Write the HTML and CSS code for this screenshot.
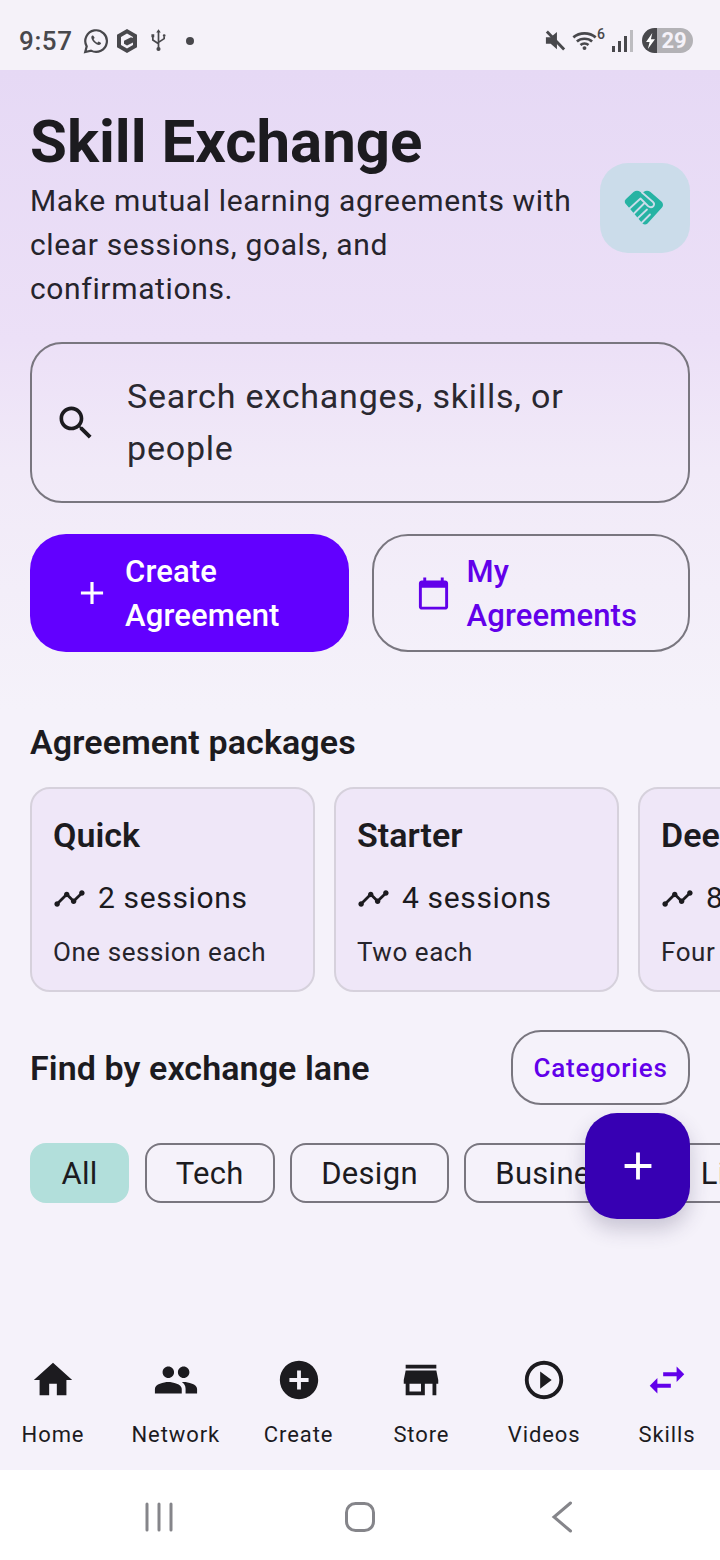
FILE: index.html
```html
<!DOCTYPE html>
<html lang="en">
<head>
<meta charset="utf-8">
<title>Skill Exchange</title>
<link rel="stylesheet" href="styles.css">
</head>
<body>
<div class="app">
  <header class="status">
    <span class="time">9:57</span>
    <svg class="st-wa" viewBox="0 0 26 26"><path class="line" d="M2.2 24l1.5-5.6A10.8 10.8 0 1 1 8 22.6z"/><path class="solid" d="M9.6 7.4c-.5 0-1.2.5-1.3 1.7-.1 1.6 1 3.6 2.6 5.2 1.7 1.7 3.9 2.8 5.3 2.6 1.2-.2 1.9-1 1.9-1.8 0-.3-2.3-1.6-2.6-1.5l-1.1 1.2c-1.4-.5-3.2-2.3-3.8-3.8l1-1.1c.2-.3-1.1-2.5-2-2.5z"/></svg>
    <svg class="st-hex" viewBox="0 0 20 24"><path class="solid" fill-rule="evenodd" d="M10 0l10 5.8v12.4L10 24 0 18.2V5.8zM10 4.5L4 8v8l6 3.5 6-3.5v-2.5l-6 3-3-1.7v-3l7-3.6 1.6.9L16 8z"/></svg>
    <svg class="st-usb" viewBox="0 0 18 24"><path class="line thin" d="M9 3v18M3 8v3.5l6 4M15 8v2l-6 4"/><path class="solid" d="M9 0l2.4 3.6H6.600zM1.500 5.500h3v3h-3zM15 5.300a1.500 1.500 0 1 1 0 3 1.500 1.500 0 0 1 0-3zM9 18.800a2.200 2.200 0 1 1 0 4.400 2.200 2.200 0 0 1 0-4.400z"/></svg>
    <span class="st-dot"></span>
    <span class="st-fill"></span>
    <svg class="st-mute" viewBox="0 0 24 24"><path class="solid" d="M2 8.500h5L13.500 3v18L7 15.500H2z"/><path class="mute-a" d="M3 2.500l18 19"/></svg>
    <svg class="st-wifi" viewBox="0 0 28 22"><path class="line wifi" d="M1.500 7.500c7-6 18-6 25 0M5.500 12c4.500-4 12.500-4 17 0M9.500 16c2.500-2 6.500-2 9 0"/><circle class="solid" cx="14" cy="19.500" r="2.200"/></svg>
    <span class="st-six">6</span>
    <svg class="st-signal" viewBox="0 0 22 24"><rect class="solid" x="0" y="17" width="3" height="6"/><rect class="solid" x="6" y="12" width="3" height="11"/><rect class="solid" x="12" y="7" width="3" height="16"/><rect class="dim" x="18" y="1" width="3" height="22"/></svg>
    <span class="st-batt"><span class="st-batt-l"><svg viewBox="0 0 12 18"><path class="white" d="M8 0L1 10h4l-2 8 8-11H6.500z"/></svg></span><span class="st-batt-r">29</span></span>
  </header>

  <main class="main">
    <section class="hero">
      <div class="hero-text">
        <h1>Skill Exchange</h1>
        <p>Make mutual learning agreements with clear sessions, goals, and confirmations.</p>
      </div>
      <div class="hero-badge">
        <svg viewBox="0 0 50 46"><path class="teal" d="M5 18Q4 15.500 6 14L13.500 7Q17 4.500 20.500 7L22 8.300 23.500 7Q27 4.500 30.500 7L42 17Q44 20 42 22.500L27.500 38.500Q25 40.500 22.500 38.500Z"/><path class="slit" d="M9 24L20.500 13.500 28 21Q31 23.500 33.500 21 35 19 33 17L22 7.500M14 28.500L24 18.500M18 33L27 24.500M22 37.500L30 29.500"/></svg>
      </div>
    </section>

    <div class="search">
      <svg viewBox="0 0 24 24"><path class="ink" d="M15.500 14h-.79l-.28-.27C15.410 12.590 16 11.110 16 9.500 16 5.910 13.090 3 9.500 3S3 5.910 3 9.500 5.910 16 9.500 16c1.610 0 3.090-.59 4.230-1.570l.27.28v.79l5 4.990L20.490 19l-4.990-5zm-6 0C7.010 14 5 11.990 5 9.500S7.010 5 9.500 5 14 7.010 14 9.500 11.990 14 9.500 14z"/></svg>
      <span>Search exchanges, skills, or people</span>
    </div>

    <div class="actions">
      <button class="btn btn-primary">
        <svg viewBox="0 0 24 24"><path class="white" d="M19 13h-6v6h-2v-6H5v-2h6V5h2v6h6z"/></svg>
        <span>Create Agreement</span>
      </button>
      <button class="btn btn-outline">
        <svg viewBox="0 0 24 24"><path class="purple" d="M20 3h-1V1h-2v2H7V1H5v2H4c-1.100 0-2 .9-2 2v16c0 1.100.9 2 2 2h16c1.100 0 2-.9 2-2V5c0-1.100-.9-2-2-2zm0 18H4V8h16v13z"/></svg>
        <span>My Agreements</span>
      </button>
    </div>

    <h2 class="sec-title packages-title">Agreement packages</h2>

    <div class="cards">
      <article class="card">
        <h3>Quick</h3>
        <div class="card-row"><svg viewBox="0 0 24 24"><use href="#timeline"/></svg><span>2 sessions</span></div>
        <div class="card-note">One session each</div>
      </article>
      <article class="card">
        <h3>Starter</h3>
        <div class="card-row"><svg viewBox="0 0 24 24"><use href="#timeline"/></svg><span>4 sessions</span></div>
        <div class="card-note">Two each</div>
      </article>
      <article class="card">
        <h3>Deep</h3>
        <div class="card-row"><svg viewBox="0 0 24 24"><use href="#timeline"/></svg><span>8 sessions</span></div>
        <div class="card-note">Four each</div>
      </article>
    </div>

    <div class="lane-head">
      <h2 class="sec-title">Find by exchange lane</h2>
      <button class="cat-btn">Categories</button>
    </div>

    <div class="chips">
      <span class="chip chip-on">All</span>
      <span class="chip">Tech</span>
      <span class="chip">Design</span>
      <span class="chip">Business</span>
      <span class="chip">Life</span>
    </div>
  </main>

  <button class="fab" aria-label="Add"><svg viewBox="0 0 24 24"><path class="white" d="M19 13h-6v6h-2v-6H5v-2h6V5h2v6h6z"/></svg></button>

  <nav class="tabs">
    <div class="tab"><svg viewBox="0 0 24 24"><path class="ink" d="M10 20v-6h4v6h5v-8h3L12 3 2 12h3v8z"/></svg><span>Home</span></div>
    <div class="tab"><svg viewBox="0 0 24 24"><path class="ink" d="M16 11c1.660 0 2.990-1.340 2.990-3S17.660 5 16 5c-1.660 0-3 1.340-3 3s1.340 3 3 3zm-8 0c1.660 0 2.990-1.340 2.990-3S9.660 5 8 5C6.340 5 5 6.340 5 8s1.340 3 3 3zm0 2c-2.330 0-7 1.170-7 3.500V19h14v-2.500c0-2.330-4.670-3.500-7-3.500zm8 0c-.29 0-.62.02-.97.05 1.160.84 1.970 1.970 1.970 3.450V19h6v-2.500c0-2.330-4.670-3.500-7-3.500z"/></svg><span>Network</span></div>
    <div class="tab"><svg viewBox="0 0 24 24"><path class="ink" d="M12 2C6.480 2 2 6.480 2 12s4.480 10 10 10 10-4.480 10-10S17.520 2 12 2zm5 11h-4v4h-2v-4H7v-2h4V7h2v4h4v2z"/></svg><span>Create</span></div>
    <div class="tab"><svg viewBox="0 0 24 24"><path class="ink" d="M20 4H4v2h16V4zm1 10v-2l-1-5H4l-1 5v2h1v6h10v-6h4v6h2v-6h1zm-9 4H6v-4h6v4z"/></svg><span>Store</span></div>
    <div class="tab"><svg viewBox="0 0 24 24"><path class="ink" d="M10 16.500l6-4.500-6-4.500v9zM12 2C6.480 2 2 6.480 2 12s4.480 10 10 10 10-4.480 10-10S17.520 2 12 2zm0 18c-4.410 0-8-3.590-8-8s3.590-8 8-8 8 3.590 8 8-3.590 8-8 8z"/></svg><span>Videos</span></div>
    <div class="tab"><svg viewBox="0 0 24 24"><path class="purple" d="M6.990 11L3 15l3.990 4v-3H14v-2H6.990v-3zM21 9l-3.990-4v3H10v2h7.010v3L21 9z"/></svg><span>Skills</span></div>
  </nav>

  <footer class="sysnav">
    <svg class="sys-recents" viewBox="0 0 28 28"><path class="sys" d="M2 1v26M14 1v26M26 1v26"/></svg>
    <svg class="sys-home" viewBox="0 0 30 30"><rect class="sys" x="1.500" y="1.500" width="27" height="27" rx="9"/></svg>
    <svg class="sys-back" viewBox="0 0 20 30"><path class="sys" d="M18.500 1L2 15l16.500 14"/></svg>
  </footer>

  <svg class="defs" width="0" height="0"><defs><path id="timeline" d="M23 8c0 1.100-.9 2-2 2-.18 0-.35-.02-.51-.07l-3.560 3.550c.05.16.07.34.07.52 0 1.100-.9 2-2 2s-2-.9-2-2c0-.18.02-.36.07-.52l-2.550-2.550c-.16.05-.34.07-.52.07s-.36-.02-.52-.07l-4.550 4.560c.05.16.07.33.07.51 0 1.100-.9 2-2 2s-2-.9-2-2 .9-2 2-2c.18 0 .35.02.51.07l4.560-4.550C8.020 9.360 8 9.180 8 9c0-1.100.9-2 2-2s2 .9 2 2c0 .18-.02.36-.07.52l2.550 2.550c.16-.05.34-.07.52-.07s.36.02.52.07l3.550-3.560C19.020 8.350 19 8.180 19 8c0-1.100.9-2 2-2s2 .9 2 2z"/></defs></svg>
</div>
</body>
</html>
```
FILE: styles.css
```css
* { box-sizing: border-box; }
html, body { margin: 0; padding: 0; }
body { font-family: Roboto, "Noto Sans", sans-serif; color: #1c1b1f; background: #f5f2fa; }
h1, h2, h3, p { margin: 0; }
button { font-family: inherit; cursor: pointer; }
.app { position: relative; width: 720px; height: 1560px; overflow: hidden; display: flex; flex-direction: column; }
.defs { position: absolute; }

.solid { fill: #48484c; }
.dim { fill: #bdbcc0; }
.line { fill: none; stroke: #48484c; stroke-width: 2.200; }
.line.thin { stroke-width: 1.800; }
.line.wifi { stroke-width: 3; }
.white { fill: #fff; }
.ink { fill: #1c1b1f; }
.purple { fill: #6200ea; }
.teal { fill: #26b3a3; }
.slit { fill: none; stroke: #cbdcea; stroke-width: 1.800; stroke-linecap: round; stroke-linejoin: round; }
.sys { fill: none; stroke: #85858a; stroke-width: 3; stroke-linecap: round; }
.mute-a { stroke: #48484c; stroke-width: 3; fill: none; }

.status { height: 70px; flex: none; display: flex; align-items: center; background: #f5f2f9; padding: 17px 27px 6px 19px; color: #48484c; }
.time { font-size: 26px; font-weight: 500; letter-spacing: .6px; }
.st-wa { width: 26px; height: 26px; margin-left: 10px; }
.st-hex { width: 20px; height: 24px; margin-left: 8px; }
.st-usb { width: 17px; height: 23px; margin-left: 13px; }
.st-dot { width: 8px; height: 8px; border-radius: 50%; background: #48484c; margin-left: 19px; }
.st-fill { flex: 1; }
.st-mute { width: 23px; height: 23px; }
.st-wifi { width: 25px; height: 21px; margin-left: 5px; }
.st-six { font-size: 14px; font-weight: 500; align-self: flex-start; margin: 9px 0 0 0; }
.st-signal { width: 22px; height: 24px; margin-left: 7px; }
.st-batt { display: flex; width: 51px; height: 25px; margin-left: 8px; border-radius: 13px; overflow: hidden; }
.st-batt-l { width: 15px; background: #48484c; display: flex; align-items: center; justify-content: flex-end; padding-right: 1px; }
.st-batt-l svg { width: 11px; height: 16px; }
.st-batt-r { flex: 1; background: #b3b2b6; color: #f5f2f9; font-size: 22px; font-weight: 700; line-height: 25px; text-align: center; padding-right: 2px; }

.main { flex: 1; min-height: 0; padding: 35px 0 0 30px; display: flex; flex-direction: column; background: linear-gradient(180deg, #e6d9f5 0, #ece0f7 270px, #f1eaf8 400px, #f5f2fa 640px); }
.hero { display: flex; align-items: center; justify-content: space-between; padding-right: 30px; }
.hero-text { width: 548px; }
h1 { font-size: 60px; line-height: 74px; font-weight: 700; letter-spacing: 0; }
.hero-text p { font-size: 30px; line-height: 44px; letter-spacing: .65px; color: #26242c; }
.hero-badge { width: 90px; height: 90px; border-radius: 28px; background: #cbdcea; display: flex; align-items: center; justify-content: center; }
.hero-badge svg { width: 50px; height: 46px; }

.search { margin: 31px 30px 0 0; height: 161px; border: 2px solid #79767f; border-radius: 32px; display: flex; align-items: center; padding: 0 30px 0 22px; gap: 29px; font-size: 34px; line-height: 52px; letter-spacing: .8px; color: #2a2830; }
.search span { position: relative; top: -1px; }
.search svg { width: 44px; height: 44px; flex: none; }

.actions { display: grid; grid-template-columns: 319px 1fr; gap: 23px; margin: 31px 30px 0 0; }
.btn { min-width: 0; height: 118px; border-radius: 36px; font-size: 31px; line-height: 44px; font-weight: 500; letter-spacing: .15px; display: flex; align-items: center; justify-content: flex-start; text-align: left; }
.btn svg { flex: none; }
.btn-primary { background: #6200ff; color: #fff; border: none; gap: 14px; padding: 2px 20px 0 43px; }
.btn-primary svg { width: 38px; height: 38px; margin-top: -2px; }
.btn-primary span { width: 170px; }
.btn-outline { background: transparent; border: 2px solid #79767f; color: #6200ea; gap: 16px; padding: 2px 20px 0 41.500px; }
.btn-outline svg { width: 35px; height: 35px; margin-top: -2px; }
.btn-outline span { width: 180px; }

.sec-title { font-size: 34px; line-height: 44px; font-weight: 600; letter-spacing: .08px; color: #1c1b1f; }
.packages-title { margin-top: 68px; letter-spacing: .12px; }

.cards { display: flex; gap: 19px; margin-top: 23px; flex: none; }
.card { flex: none; width: 285px; height: 205px; border: 2px solid #d6d1dc; border-radius: 20px; background: #efe7f8; padding: 24px 21px 0; }
.card h3 { font-size: 34px; line-height: 44px; font-weight: 600; }
.card-row { display: flex; align-items: center; gap: 12px; margin-top: 19px; font-size: 30px; line-height: 44px; letter-spacing: .65px; }
.card-row svg { width: 33px; height: 33px; flex: none; fill: #1c1b1f; }
.card-note { margin-top: 14px; font-size: 26px; line-height: 36px; letter-spacing: .55px; color: #26242c; }

.lane-head { display: flex; align-items: center; justify-content: space-between; margin: 38px 30px 0 0; }
.cat-btn { height: 75px; width: 179px; border: 2px solid #79767f; border-radius: 30px; background: transparent; color: #6200ea; font-size: 26px; font-weight: 500; letter-spacing: .8px; padding: 0; }

.chips { display: flex; gap: 15.500px; margin-top: 38px; flex: none; }
.chip { flex: none; height: 60px; padding: 0 29px; border: 2px solid #79767f; border-radius: 16px; font-size: 31px; line-height: 58px; letter-spacing: .3px; color: #1c1b1f; }
.chip-on { background: #b2dfdb; border-color: #b2dfdb; padding: 0 29.500px; }

.fab { position: absolute; left: 585px; top: 1113px; width: 105px; height: 106px; border: none; border-radius: 32px; background: #3700b3; display: flex; align-items: center; justify-content: center; padding: 0; box-shadow: 0 10px 20px rgba(60, 50, 90, .24); }
.fab svg { width: 46px; height: 46px; }

.tabs { height: 130px; flex: none; display: flex; justify-content: space-between; background: #f5f2fa; }
.tab { width: 106px; display: flex; flex-direction: column; align-items: center; padding-top: 17px; font-size: 22px; letter-spacing: .9px; line-height: 30px; }
.tab svg { width: 46px; height: 46px; margin-bottom: 17px; }

.sysnav { height: 90px; flex: none; background: #fff; display: flex; align-items: center; padding-top: 4px; }
.sysnav svg { flex: none; overflow: visible; }
.sys-recents { width: 28px; height: 28px; margin-left: 145px; }
.sys-home { width: 30px; height: 30px; margin-left: 172px; }
.sys-back { width: 20px; height: 30px; margin-left: 177px; }
```
